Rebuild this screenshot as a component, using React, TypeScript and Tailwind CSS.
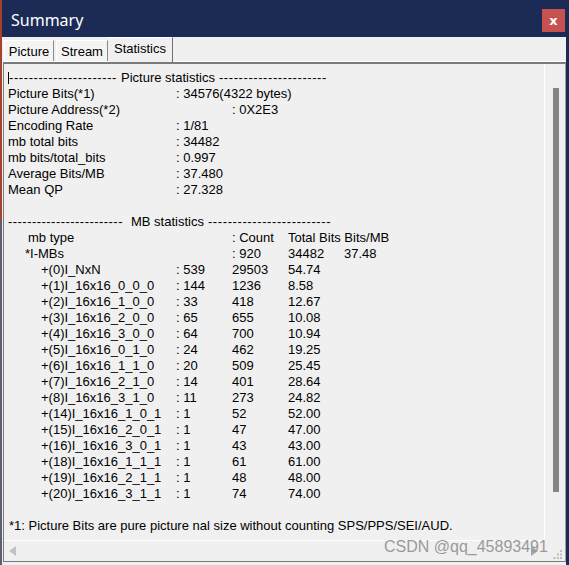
import React from "react";

const pictureRows: { label: string; value: string; wide?: boolean }[] = [
  { label: "Picture Bits(*1)", value: ": 34576(4322 bytes)" },
  { label: "Picture Address(*2)", value: ": 0X2E3", wide: true },
  { label: "Encoding Rate", value: ": 1/81" },
  { label: "mb total bits", value: ": 34482" },
  { label: "mb bits/total_bits", value: ": 0.997" },
  { label: "Average Bits/MB", value: ": 37.480" },
  { label: "Mean QP", value: ": 27.328" },
];

const mbRows: [string, string, string, string][] = [
  ["+(0)I_NxN", ": 539", "29503", "54.74"],
  ["+(1)I_16x16_0_0_0", ": 144", "1236", "8.58"],
  ["+(2)I_16x16_1_0_0", ": 33", "418", "12.67"],
  ["+(3)I_16x16_2_0_0", ": 65", "655", "10.08"],
  ["+(4)I_16x16_3_0_0", ": 64", "700", "10.94"],
  ["+(5)I_16x16_0_1_0", ": 24", "462", "19.25"],
  ["+(6)I_16x16_1_1_0", ": 20", "509", "25.45"],
  ["+(7)I_16x16_2_1_0", ": 14", "401", "28.64"],
  ["+(8)I_16x16_3_1_0", ": 11", "273", "24.82"],
  ["+(14)I_16x16_1_0_1", ": 1", "52", "52.00"],
  ["+(15)I_16x16_2_0_1", ": 1", "47", "47.00"],
  ["+(16)I_16x16_3_0_1", ": 1", "43", "43.00"],
  ["+(18)I_16x16_1_1_1", ": 1", "61", "61.00"],
  ["+(19)I_16x16_2_1_1", ": 1", "48", "48.00"],
  ["+(20)I_16x16_3_1_1", ": 1", "74", "74.00"],
];

const d = (n: number) => "-".repeat(n);

export default function App() {
  return (
    <div className="w-[569px] h-[565px] overflow-hidden relative flex bg-[#f0f0f0] font-['Liberation_Sans',Arial,sans-serif] text-[13px] leading-[16px] text-black">
      {/* background strip behind the window */}
      <div className="w-[2px] flex flex-col shrink-0">
        <div className="h-[220px] bg-[#a8402e]" />
        <div className="flex-1 bg-[#5b5f73]" />
      </div>

      {/* window */}
      <div className="flex-1 flex flex-col border-r-[3px] border-r-[#1c2b56]">
        {/* title bar */}
        <div className="h-[37px] shrink-0 bg-[#1c2b56] flex items-center justify-between pl-[9px] pr-[1px]">
          <span className="text-white text-[16px] font-['Noto_Sans',sans-serif] leading-none mt-[2px]">
            Summary
          </span>
          <div className="w-[23px] h-[23px] mt-[3px] bg-[#c75050] flex items-center justify-center text-white text-[13px] font-bold font-['DejaVu_Sans',sans-serif] leading-none">
            x
          </div>
        </div>

        {/* tabs */}
        <div className="h-[25px] shrink-0 flex items-end pl-[2px] border-b border-b-white">
          <div className="w-[50px] h-[21px] border-l border-t border-white border-r border-r-[#8a8a8a] bg-[#f4f4f4] flex items-center justify-center pt-[1px]">
            Picture
          </div>
          <div className="w-[52px] h-[21px] ml-[2px] border-l border-t border-white border-r border-r-[#8a8a8a] bg-[#f4f4f4] flex items-center justify-center pt-[1px]">
            Stream
          </div>
          <div className="w-[65px] h-[25px] -mb-[1px] border-t border-white border-r border-r-[#6e6e6e] bg-[#f0f0f0] flex items-center justify-center pb-[2px]">
            Statistics
          </div>
        </div>

        {/* content box */}
        <div className="ml-[1px] h-[500px] shrink-0 flex flex-col border-t-2 border-t-[#7a7a7a] border-l border-l-[#7a7a7a] border-b border-b-[#7a7a7a] border-r border-r-[#a0a0a0]">
          <div className="h-[476px] flex">
            {/* text area */}
            <div className="flex-1 pt-[6px] pl-[4px] whitespace-nowrap overflow-hidden">
              <div className="flex items-center">
                <span className="inline-block w-[1px] h-[12px] bg-black" />
                <span className="tracking-[0.58px]">{d(22)}</span>
                <span className="ml-[4px] mr-[4px]">Picture statistics</span>
                <span className="tracking-[0.58px]">{d(22)}</span>
              </div>
              {pictureRows.map((r) => (
                <div key={r.label} className="flex">
                  <span className={r.wide ? "w-[224px]" : "w-[168px]"}>{r.label}</span>
                  <span>{r.value}</span>
                </div>
              ))}
              <div className="h-[16px]" />
              <div className="flex">
                <span className="tracking-[0.46px]">{d(24)}</span>
                <span className="ml-[8px] mr-[4px]">MB statistics</span>
                <span className="tracking-[0.6px]">{d(25)}</span>
              </div>
              <div className="flex">
                <span className="w-[224px] pl-[20px]">mb type</span>
                <span className="w-[56px]">: Count</span>
                <span>Total Bits Bits/MB</span>
              </div>
              <div className="flex">
                <span className="w-[224px] pl-[17px]">*I-MBs</span>
                <span className="w-[56px]">: 920</span>
                <span className="w-[56px]">34482</span>
                <span>37.48</span>
              </div>
              {mbRows.map((r) => (
                <div key={r[0]} className="flex">
                  <span className="w-[168px] pl-[33px]">{r[0]}</span>
                  <span className="w-[56px]">{r[1]}</span>
                  <span className="w-[56px]">{r[2]}</span>
                  <span>{r[3]}</span>
                </div>
              ))}
              <div className="h-[16px]" />
              <div className="pl-[1px]">
                *1: Picture Bits are pure picture nal size without counting SPS/PPS/SEI/AUD.
              </div>
            </div>

            {/* vertical scrollbar */}
            <div className="w-[21px] shrink-0 border-l border-l-white">
              <div className="ml-[8px] mt-[24px] w-[6px] h-[404px] bg-[#858585]" />
            </div>
          </div>

          {/* bottom row */}
          <div className="flex-1 flex">
            <div className="flex-1 border-t border-t-white flex items-center justify-between pl-[5px] pr-[6px]">
              <svg width="7" height="10" viewBox="0 0 7 10">
                <path d="M7 0 L0 5 L7 10 Z" fill="#c2c2c2" />
              </svg>
              <svg width="7" height="10" viewBox="0 0 7 10">
                <path d="M0 0 L7 5 L0 10 Z" fill="#a6a6a6" />
              </svg>
            </div>
            <div className="w-[21px] shrink-0 flex items-end justify-end pr-[2px] pb-[1px]">
              <svg width="11" height="11" viewBox="0 0 11 11">
                <rect x="8" y="1" width="2" height="2" fill="#bcbcbc" />
                <rect x="5" y="4.5" width="2" height="2" fill="#bcbcbc" />
                <rect x="8" y="4.5" width="2" height="2" fill="#bcbcbc" />
                <rect x="1.5" y="8" width="2" height="2" fill="#bcbcbc" />
                <rect x="5" y="8" width="2" height="2" fill="#bcbcbc" />
                <rect x="8" y="8" width="2" height="2" fill="#bcbcbc" />
              </svg>
            </div>
          </div>
        </div>
      </div>

      {/* watermark */}
      <div className="absolute left-[384px] top-[538px] text-[16px] leading-[18px] text-[#9a9a9a] whitespace-nowrap font-['Liberation_Sans',Arial,sans-serif]">
        CSDN @qq_45893491
      </div>
    </div>
  );
}
